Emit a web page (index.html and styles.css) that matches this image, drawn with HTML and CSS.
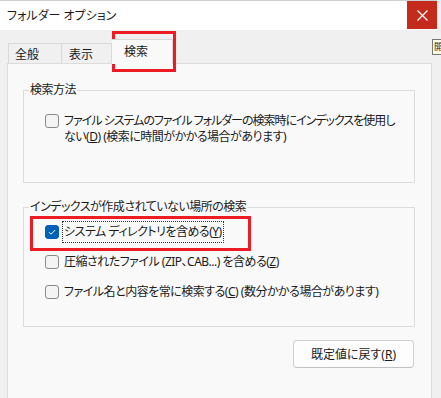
FILE: index.html
```html
<!DOCTYPE html>
<html>
<head>
    <title>フォルダー オプション</title>
    <link rel="stylesheet" href="styles.css">
</head>
<body>

    <div class="window">
        <div class="titlebar">
            <span class="title">フォルダー オプション</span>
            <span class="close">
                <svg width="11" height="11" viewBox="0 0 11 11"><path d="M0.5 0.5 L10.5 10.5 M10.5 0.5 L0.5 10.5" stroke="#fff" stroke-width="1.2" fill="none"/></svg>
            </span>
        </div>

        <div class="content">
            <div class="tabs">
                <div class="tab tab-first">全般</div>
                <div class="tab">表示</div>
                <div class="tab active">検索</div>
            </div>

            <div class="panel">
                <fieldset class="group group-method">
                    <legend>検索方法</legend>
                    <label class="option">
                        <span class="box"></span>
                        <span class="text"><span class="tight">ファイル システムのファイル フォルダーの検索時にインデックスを使用し</span><br>ない(<u>D</u>) (検索に時間がかかる場合があります)</span>
                    </label>
                </fieldset>

                <fieldset class="group group-noindex">
                    <legend>インデックスが作成されていない場所の検索</legend>
                    <label class="option row">
                        <span class="box checked">
                            <svg width="14" height="14" viewBox="0 0 14 14"><path d="M4 7.2 L6 9.2 L10.2 5" stroke="#fff" stroke-width="1" fill="none"/></svg>
                        </span>
                        <span class="text focus">システム ディレクトリを含める(<u>Y</u>)</span>
                    </label>
                    <label class="option row">
                        <span class="box"></span>
                        <span class="text">圧縮されたファイル (ZIP、CAB...) を含める(<u>Z</u>)</span>
                    </label>
                    <label class="option row">
                        <span class="box"></span>
                        <span class="text">ファイル名と内容を常に検索する(<u>C</u>) (数分かかる場合があります)</span>
                    </label>
                </fieldset>

                <div class="actions">
                    <button class="btn">既定値に戻す(<u>R</u>)</button>
                </div>
            </div>
        </div>

        <!-- red annotation boxes over the screenshot -->
        <div class="mark mark-tab"></div>
        <div class="mark mark-option"></div>
        <div class="tooltip">開</div>
    </div>

</body>
</html>
```

FILE: styles.css
```css
body {
    margin: 0;
    overflow: hidden;
    background-color: #f0f0f0;
    font-family: "Noto Sans", "Noto Sans CJK JP", sans-serif;
    font-size: 12px;
    font-feature-settings: "palt";
    color: #1a1a1a;
}

.window {
    position: relative;
    width: 441px;
    height: 398px;
    overflow: hidden;
}

.titlebar {
    display: flex;
    align-items: stretch;
    justify-content: space-between;
    height: 29px;
    margin-right: 4px;
    border-top: 1px solid #cfcfcf;
    background-color: #fff;
}

.title {
    padding-left: 7px;
    line-height: 29px;
}

.close {
    display: flex;
    align-items: center;
    justify-content: center;
    width: 30px;
    height: 28px;
    background-color: #c42b1c;
}

.content {
    padding: 0 9px 0 7px;
}

.tabs {
    display: flex;
    align-items: flex-end;
    height: 33px;
    padding-left: 1px;
}

.tab {
    box-sizing: border-box;
    height: 20px;
    width: 50px;
    padding: 3px 0 0 7px;
    line-height: 16px;
    border: 1px solid #d9d9d9;
    border-left: none;
    border-bottom: none;
}

.tab-first {
    width: 54px;
    border-left: 1px solid #d9d9d9;
    padding-left: 6px;
}

.tab.active {
    position: relative;
    z-index: 1;
    width: 61px;
    height: 25px;
    margin-bottom: -1px;
    padding: 4px 0 0 12px;
    background-color: #f9f9f9;
}

.panel {
    height: 340px;
    padding: 18px 16px 0 15px;
    background-color: #f9f9f9;
    border: 1px solid #dcdcdc;
    border-bottom: none;
}

.group {
    margin: 0;
    padding: 0;
    border: 1px solid #dcdcdc;
    min-width: 0;
}

.group legend {
    margin-left: 5px;
    padding: 0 1px;
    line-height: 16px;
    letter-spacing: -0.5px;
}

.group-method {
    padding-top: 12px;
    padding-bottom: 34px;
}

.group-noindex {
    margin-top: 16px;
    padding-top: 2px;
    padding-bottom: 19px;
}

.option {
    display: flex;
    align-items: flex-start;
    gap: 3px;
    margin-left: 21px;
}

.option.row {
    align-items: center;
    height: 30px;
}

.group-method .box {
    margin-top: 4px;
}

.box {
    box-sizing: border-box;
    flex: none;
    width: 14px;
    height: 14px;
    border: 1px solid #8a8a8a;
    border-radius: 3px;
    background-color: #f4f4f4;
}

.box.checked {
    display: flex;
    border-color: #005fb8;
    background-color: #005fb8;
}

.box.checked svg {
    margin: -1px;
}

.text {
    padding: 2px 1px;
    line-height: 16px;
    white-space: nowrap;
    letter-spacing: -0.5px;
    border: 1px solid transparent;
}

.text .tight {
    letter-spacing: -1px;
}

.text.focus {
    border: 1px dotted #333;
}

.actions {
    display: flex;
    justify-content: flex-end;
    margin-top: 13px;
    padding-right: 1px;
}

.btn {
    box-sizing: border-box;
    width: 121px;
    height: 28px;
    font: inherit;
    color: #1a1a1a;
    background-color: #fdfdfd;
    border: 1px solid #d0d0d0;
    border-bottom-color: #c2c2c2;
    border-radius: 4px;
}

.mark {
    position: absolute;
    box-sizing: border-box;
    border: 3px solid #ed1c24;
}

.mark-tab {
    left: 112px;
    top: 31px;
    width: 64px;
    height: 41px;
}

.mark-option {
    left: 30px;
    top: 216px;
    width: 221px;
    height: 35px;
}

.tooltip {
    position: absolute;
    left: 432px;
    top: 39px;
    height: 14px;
    padding: 0 1px;
    line-height: 14px;
    font-size: 9px;
    background-color: #fbfbe6;
    border: 1px solid #767676;
}
```
